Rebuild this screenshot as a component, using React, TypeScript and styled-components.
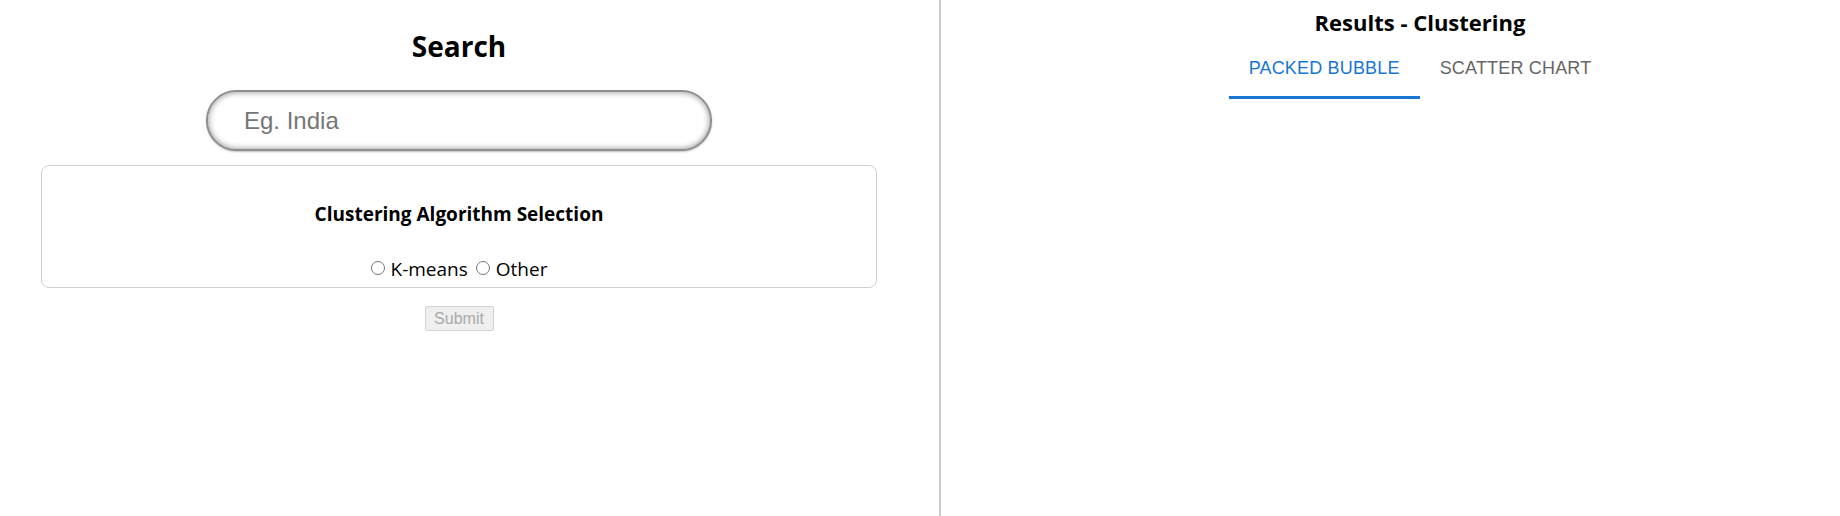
import React, { useState } from "react";
import styled, { createGlobalStyle } from "styled-components";

const GlobalStyle = createGlobalStyle`
  html, body {
    margin: 0;
    padding: 0;
    background: #ffffff;
    overflow: hidden;
  }
  body {
    font-family: "Open Sans", "Noto Sans", sans-serif;
    color: #000;
  }
`;

const Page = styled.div`
  display: flex;
  align-items: stretch;
  width: 1840px;
  height: 516px;
  overflow: hidden;
`;

const SearchColumn = styled.section`
  flex: 0 0 918px;
  display: flex;
  flex-direction: column;
  align-items: center;
  padding-top: 30px;
  box-sizing: border-box;
`;

const PanelTitle = styled.h2<{ $size: number }>`
  margin: 0;
  font-family: "Open Sans", "Noto Sans", sans-serif;
  font-weight: 700;
  font-size: ${(p) => p.$size}px;
  line-height: ${(p) => (p.$size > 24 ? 32 : 24)}px;
  color: #000;
  text-align: center;
`;

const SearchInput = styled.input`
  margin-top: 28px;
  width: 506px;
  height: 61px;
  box-sizing: border-box;
  border: 2px solid #8f8f8f;
  border-radius: 31px;
  padding: 0 20px 0 36px;
  font-family: "Liberation Sans", Arial, sans-serif;
  font-size: 24px;
  color: #333;
  background: #fff;
  outline: none;
  box-shadow: inset 0 0 6px rgba(0, 0, 0, 0.45), 0 1px 2px rgba(0, 0, 0, 0.25);
  &::placeholder {
    color: #757575;
  }
`;

const AlgorithmCard = styled.div`
  margin-top: 14px;
  width: 836px;
  height: 123px;
  box-sizing: border-box;
  border: 1px solid #cfcfcf;
  border-radius: 8px;
  padding-top: 36px;
  display: flex;
  flex-direction: column;
  align-items: center;
`;

const CardTitle = styled.h4`
  margin: 0;
  font-family: "Open Sans", "Noto Sans", sans-serif;
  font-weight: 700;
  font-size: 19px;
  line-height: 24px;
`;

const RadioRow = styled.div`
  margin-top: 31px;
  display: flex;
  align-items: center;
  gap: 8px;
  font-family: "Open Sans", "Noto Sans", sans-serif;
  font-size: 19px;
  line-height: 24px;
`;

const RadioLabel = styled.label`
  display: inline-flex;
  align-items: center;
  gap: 6px;
  cursor: pointer;
`;

const Radio = styled.input`
  margin: 0;
  width: 14px;
  height: 14px;
  position: relative;
  top: -1px;
`;

const SubmitButton = styled.button`
  margin-top: 18px;
  width: 69px;
  height: 25px;
  box-sizing: border-box;
  border: 1px solid #d2d2d2;
  border-radius: 2px;
  background: #efefef;
  color: #a9a9a9;
  font-family: "Liberation Sans", Arial, sans-serif;
  font-size: 16px;
  padding: 0;
`;

const ResultsColumn = styled.section`
  flex: 0 0 958px;
  margin-left: 21px;
  border-left: 2px solid #cbcbcb;
  display: flex;
  flex-direction: column;
  align-items: center;
  padding-top: 10px;
`;

const TabList = styled.div`
  margin-top: 12px;
  display: flex;
`;

const Tab = styled.button<{ $active: boolean }>`
  position: relative;
  border: none;
  background: transparent;
  padding: 12px 20px 21px;
  font-family: "Liberation Sans", Arial, sans-serif;
  font-size: 18px;
  line-height: 20px;
  letter-spacing: 0.01em;
  text-transform: uppercase;
  color: ${(p) => (p.$active ? "#1976d2" : "#666666")};
  cursor: pointer;
`;

const Indicator = styled.span`
  position: absolute;
  left: 0;
  right: 0;
  bottom: 0;
  height: 3px;
  background: #1976d2;
`;

export default function App() {
  const [tab, setTab] = useState(0);
  const tabs = ["Packed Bubble", "Scatter Chart"];
  return (
    <>
      <GlobalStyle />
      <Page>
        <SearchColumn>
          <PanelTitle $size={28}>Search</PanelTitle>
          <SearchInput type="text" placeholder="Eg. India" />
          <AlgorithmCard>
            <CardTitle>Clustering Algorithm Selection</CardTitle>
            <RadioRow>
              <RadioLabel>
                <Radio type="radio" name="algo" value="kmeans" />
                K-means
              </RadioLabel>
              <RadioLabel>
                <Radio type="radio" name="algo" value="other" />
                Other
              </RadioLabel>
            </RadioRow>
          </AlgorithmCard>
          <SubmitButton disabled>Submit</SubmitButton>
        </SearchColumn>
        <ResultsColumn>
          <PanelTitle $size={22}>Results - Clustering</PanelTitle>
          <TabList>
            {tabs.map((t, i) => (
              <Tab key={t} $active={tab === i} onClick={() => setTab(i)}>
                {t}
                {tab === i && <Indicator />}
              </Tab>
            ))}
          </TabList>
        </ResultsColumn>
      </Page>
    </>
  );
}
